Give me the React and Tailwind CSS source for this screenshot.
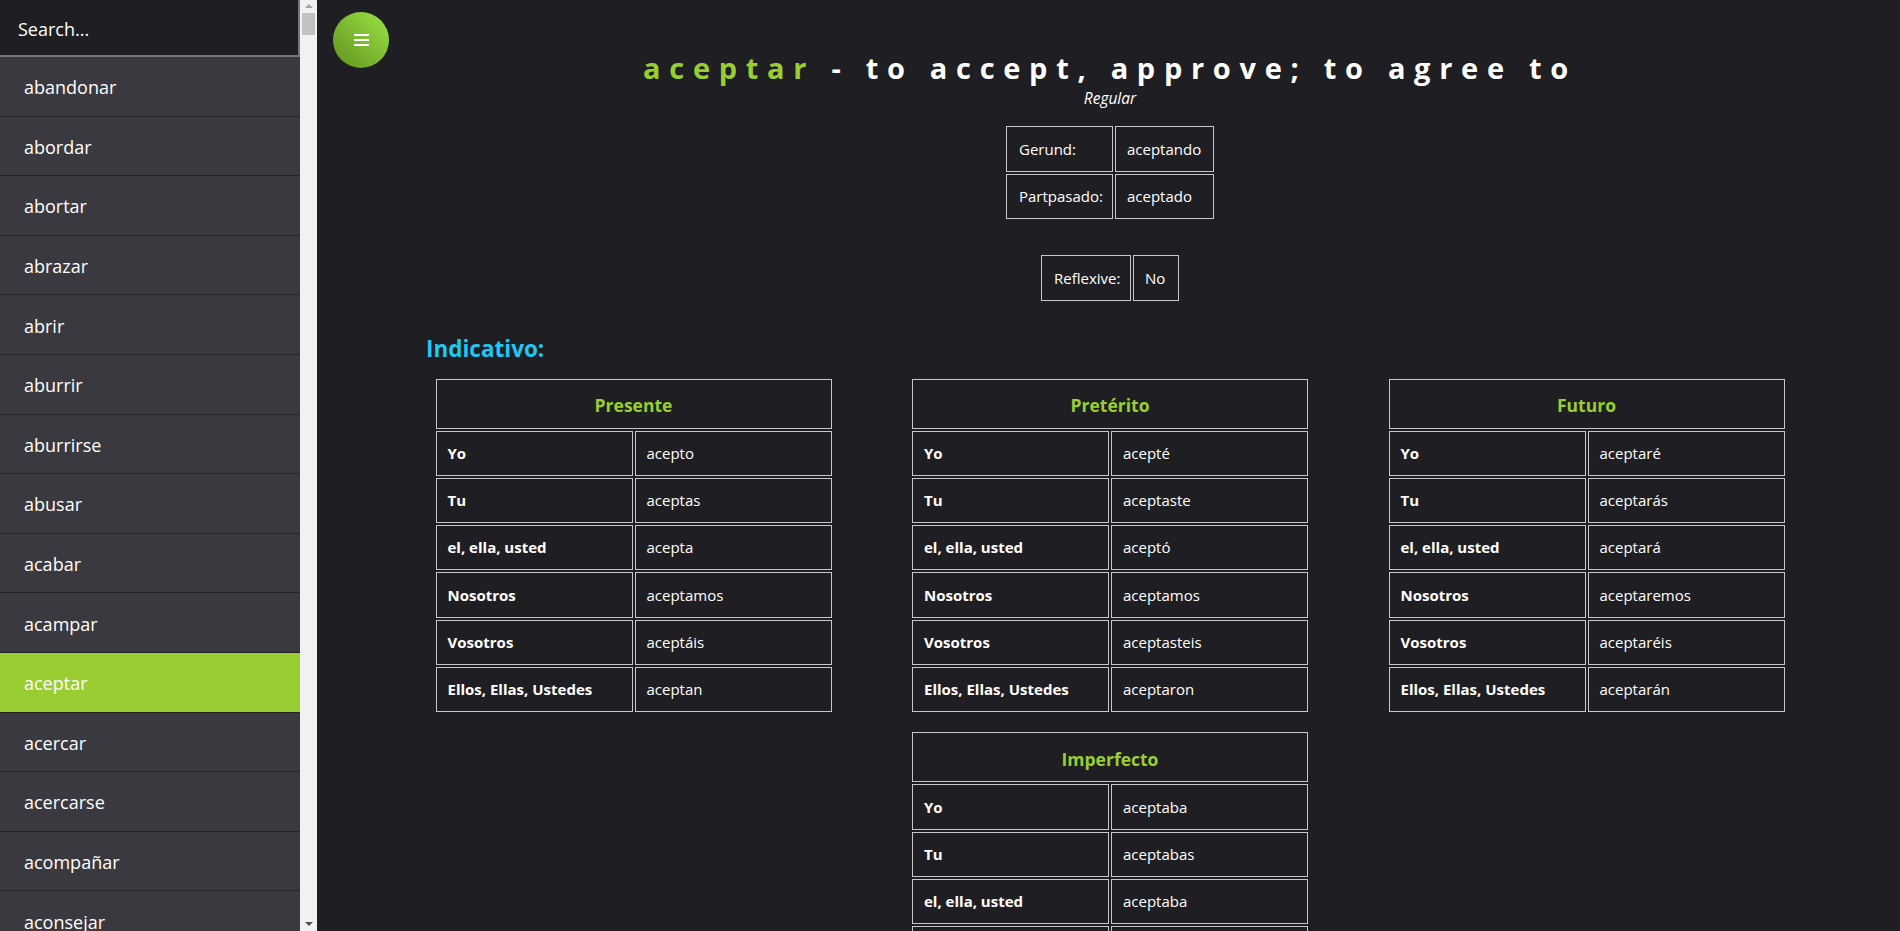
import React from "react";

const verbs = [
  "abandonar",
  "abordar",
  "abortar",
  "abrazar",
  "abrir",
  "aburrir",
  "aburrirse",
  "abusar",
  "acabar",
  "acampar",
  "aceptar",
  "acercar",
  "acercarse",
  "acompañar",
  "aconsejar",
  "acordar",
];

const pronouns = ["Yo", "Tu", "el, ella, usted", "Nosotros", "Vosotros", "Ellos, Ellas, Ustedes"];

const tenses = [
  { name: "Presente", forms: ["acepto", "aceptas", "acepta", "aceptamos", "aceptáis", "aceptan"] },
  { name: "Pretérito", forms: ["acepté", "aceptaste", "aceptó", "aceptamos", "aceptasteis", "aceptaron"] },
  { name: "Futuro", forms: ["aceptaré", "aceptarás", "aceptará", "aceptaremos", "aceptaréis", "aceptarán"] },
  { name: "Imperfecto", forms: ["aceptaba", "aceptabas", "aceptaba", "aceptábamos", "aceptabais", "aceptaban"] },
];

const Sidebar = ({ active }) => (
  <aside className="flex h-full w-[317px] shrink-0">
    <div className="flex w-[300px] flex-col bg-[#3a3940]">
      <div className="flex h-[57px] shrink-0 items-center border-r-2 border-b-2 border-[#767676] bg-[#1f1e23] pt-[3px] pl-[18px] text-[18px] text-white">
        Search...
      </div>
      {verbs.map((v) => (
        <div
          key={v}
          className={`flex h-[59.6px] shrink-0 items-center border-b border-[#242328] pt-[3px] pl-[24px] text-[18px] text-white ${
            v === active ? "bg-[#9acd32]" : "bg-[#3a3940]"
          }`}
        >
          {v}
        </div>
      ))}
    </div>
    {/* scrollbar */}
    <div className="flex w-[17px] flex-col items-center bg-[#f1f1f1]">
      <div className="mt-[4px] h-0 w-0 border-x-[4px] border-b-[4px] border-x-transparent border-b-[#a3a3a3]" />
      <div className="mt-[5px] h-[22px] w-[13px] bg-[#c1c1c1]" />
      <div className="mt-auto mb-[5px] h-0 w-0 border-x-[4px] border-t-[4px] border-x-transparent border-t-[#505050]" />
    </div>
  </aside>
);

const InfoTable = ({ rows, widths }) => (
  <div className="flex flex-col gap-[2px]">
    {rows.map(([k, v]) => (
      <div key={k} className="flex gap-[2px]">
        <div className={`flex h-[45.5px] items-center border border-[#c8c8c8] pl-[12px] ${widths[0]}`}>{k}</div>
        <div className={`flex h-[45.5px] items-center border border-[#c8c8c8] pl-[11px] ${widths[1]}`}>{v}</div>
      </div>
    ))}
  </div>
);

const TenseTable = ({ tense }) => (
  <div className="grid w-[400px] grid-cols-2 gap-[2px] p-[2px]">
    <div className="col-span-2 flex h-[50px] items-center justify-center border border-[#c8c8c8] pt-[3px] text-[17.5px] font-bold text-[#9acd32]">
      {tense.name}
    </div>
    {pronouns.map((p, i) => (
      <React.Fragment key={p}>
        <div className="flex h-[45.3px] items-center border border-[#c8c8c8] pl-[11px] text-[15px] font-bold text-white">
          {p}
        </div>
        <div className="flex h-[45.3px] items-center border border-[#c8c8c8] pl-[11px] text-[15px] text-white">
          {tense.forms[i]}
        </div>
      </React.Fragment>
    ))}
  </div>
);

export default function App() {
  return (
    <div
      className="flex h-screen overflow-hidden bg-[#1f1e23] text-white"
      style={{ fontFamily: '"Open Sans", "Noto Sans", sans-serif' }}
    >
      <Sidebar active="aceptar" />

      <main className="relative flex-1 overflow-hidden pl-[3px]">
        <button className="absolute top-[12px] left-[16px] flex h-[56px] w-[56px] flex-col items-center justify-center gap-[3px] rounded-full bg-gradient-to-tr from-[#62921e] to-[#9ae445]">
          <span className="h-[2px] w-[15px] bg-white" />
          <span className="h-[2px] w-[15px] bg-white" />
          <span className="h-[2px] w-[15px] bg-white" />
        </button>

        <div className="flex flex-col items-center">
          <h1 className="mt-[50px] text-[29px] leading-[36px] font-bold tracking-[8.7px] whitespace-nowrap">
            <span className="text-[#9acd32]">aceptar</span> - to accept, approve; to agree to
          </h1>
          <div className="mt-[2px] text-[15.5px] leading-[20px] italic">Regular</div>

          <div className="mt-[18px] text-[15px]">
            <InfoTable
              rows={[
                ["Gerund:", "aceptando"],
                ["Partpasado:", "aceptado"],
              ]}
              widths={["w-[107px]", "w-[99px]"]}
            />
          </div>

          <div className="mt-[36px] text-[15px]">
            <InfoTable rows={[["Reflexive:", "No"]]} widths={["w-[90px]", "w-[46px]"]} />
          </div>
        </div>

        <section className="mx-auto w-[1368px]">
          <h2 className="mt-[33px] text-[22.5px] leading-[30px] font-bold text-[#1fc8f2]">Indicativo:</h2>
          <div className="mt-[13px] flex flex-wrap justify-center gap-x-[76.5px] gap-y-[16px]">
            {tenses.map((t) => (
              <TenseTable key={t.name} tense={t} />
            ))}
          </div>
        </section>
      </main>
    </div>
  );
}
